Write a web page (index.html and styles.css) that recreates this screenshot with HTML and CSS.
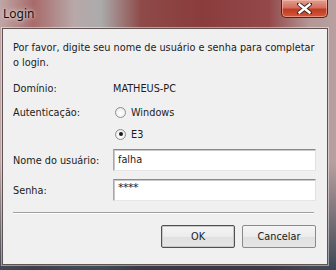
FILE: index.html
```html
<!DOCTYPE html>
<html lang="pt">
<head>
  <meta charset="UTF-8" />
  <title>Login</title>
  <link rel="stylesheet" href="styles.css">
</head>
<body>
  <div class="window">
    <!-- Title bar -->
    <div class="titlebar">
      <span class="title">Login</span>
      <button class="close-btn" aria-label="Fechar">
        <svg width="15" height="11" viewBox="0 0 15 11">
          <path d="M2 1 L13 10 M13 1 L2 10" stroke="#3a2a2a" stroke-width="4.2" stroke-linecap="square"/>
          <path d="M2.5 1.5 L12.5 9.5 M12.5 1.5 L2.5 9.5" stroke="#fff" stroke-width="2.4" stroke-linecap="square"/>
        </svg>
      </button>
    </div>

    <!-- Client area -->
    <div class="client">
      <p class="intro">Por favor, digite seu nome de usuário e senha para completar o login.</p>

      <div class="row row-domain">
        <span class="label">Domínio:</span>
        <span class="value">MATHEUS-PC</span>
      </div>
      <div class="row row-auth">
        <span class="label">Autenticação:</span>
        <label class="radio"><span class="dot"></span>Windows</label>
      </div>
      <div class="row row-e3">
        <span class="label"></span>
        <label class="radio"><span class="dot checked"></span>E3</label>
      </div>
      <div class="row row-user">
        <span class="label">Nome do usuário:</span>
        <div class="field">falha</div>
      </div>
      <div class="row row-pass">
        <span class="label">Senha:</span>
        <div class="field pass">****</div>
      </div>

      <div class="separator"></div>

      <div class="buttons">
        <button class="btn btn-default">OK</button>
        <button class="btn">Cancelar</button>
      </div>
    </div>
  </div>
</body>
</html>
```

FILE: styles.css
```css
html, body {
  margin: 0;
  padding: 0;
}
body {
  width: 336px;
  height: 270px;
  overflow: hidden;
  font-family: "DejaVu Sans Condensed", "DejaVu Sans", Tahoma, sans-serif;
  font-stretch: condensed;
  font-size: 10.8px;
  color: #1c1c1c;
  background:
    linear-gradient(to bottom, rgba(0,0,0,0) 0, rgba(0,0,0,0) 60%, rgba(40,56,70,0.85) 100%),
    linear-gradient(to right, #bfa6a6 0, #a86a6a 10%, #b8a8a8 22%, #ababab 30%, #8e4a48 42%, #8a3c3c 60%, #94484a 80%, #b49696 92%, #b9a0a0 100%);
}
.window {
  display: flex;
  flex-direction: column;
}
.titlebar {
  height: 28px;
  display: flex;
  align-items: flex-start;
  padding: 0 8px 0 3px;
}
.title {
  margin-top: 7px;
  font-family: "Noto Sans", "Open Sans", sans-serif;
  font-stretch: normal;
  font-size: 12px;
  line-height: 14px;
  color: #111;
  text-shadow: 0 0 6px rgba(255,255,255,0.8), 0 0 3px rgba(255,255,255,0.6);
}
.close-btn {
  margin-left: auto;
  width: 47px;
  height: 18px;
  padding: 0;
  border: 1px solid #4a2424;
  border-top: none;
  border-radius: 0 0 5px 5px;
  background: linear-gradient(to bottom, #e0a090 0, #d27060 45%, #c23a22 55%, #d05a3a 100%);
  box-shadow: inset 0 0 0 1px rgba(255,200,190,0.5);
  display: flex;
  align-items: center;
  justify-content: center;
}
.client {
  margin-left: 2px;
  width: 303px;
  height: 235px;
  background: #f0f0f0;
  border: 1px solid #5e5252;
  box-shadow: 0 0 0 1px rgba(255,255,255,0.45);
  padding: 0 11px 0 10px;
}
.intro {
  margin: 11px 0 0;
  line-height: 15px;
}
.row {
  display: flex;
  align-items: center;
  height: 22px;
}
.row-domain { margin-top: 7px; }
.row-auth { margin-top: 2px; }
.row-e3 { margin-top: 0; }
.row-user { margin-top: 4px; }
.row-pass { margin-top: 8px; }
.label {
  width: 100px;
  flex: none;
}
.radio {
  display: flex;
  align-items: center;
  gap: 5px;
  margin-left: 2px;
}
.dot {
  width: 11px;
  height: 11px;
  border-radius: 50%;
  border: 1px solid #8f8f8f;
  box-sizing: border-box;
  background: radial-gradient(circle at 50% 60%, #ffffff 0, #f4f4f4 50%, #d8d8d8 100%);
  position: relative;
}
.dot.checked::after {
  content: "";
  position: absolute;
  left: 2.5px;
  top: 2.5px;
  width: 4px;
  height: 4px;
  border-radius: 50%;
  background: #1a1a1a;
}
.field {
  width: 203px;
  height: 22px;
  box-sizing: border-box;
  background: #fff;
  border: 1px solid;
  border-color: #8a8a8a #e2e2e2 #e6e6e6 #a8a8a8;
  box-shadow: inset 1px 1px 0 #c8c8c8;
  padding: 3px 0 0 4px;
  line-height: 13px;
}
.field.pass {
  padding-top: 1px;
  font-family: "DejaVu Sans", sans-serif;
  font-stretch: normal;
  font-size: 11px;
  letter-spacing: -0.5px;
}
.separator {
  margin-top: 11px;
  height: 1px;
  background: #a0a0a0;
  border-bottom: 1px solid #fff;
  width: 301px;
}
.buttons {
  display: flex;
  justify-content: flex-end;
  gap: 7px;
  margin-top: 11px;
}
.btn {
  width: 74px;
  height: 23px;
  font-family: inherit;
  font-size: 10.8px;
  color: #1c1c1c;
  border: 1px solid #8a8a8a;
  border-radius: 2px;
  background: linear-gradient(to bottom, #f4f4f4 0, #ececec 50%, #e0e0e0 51%, #e6e6e6 100%);
  padding: 0;
}
.btn-default {
  border-color: #505050;
  box-shadow: inset 0 0 0 1px #c8c8c8;
}
```
